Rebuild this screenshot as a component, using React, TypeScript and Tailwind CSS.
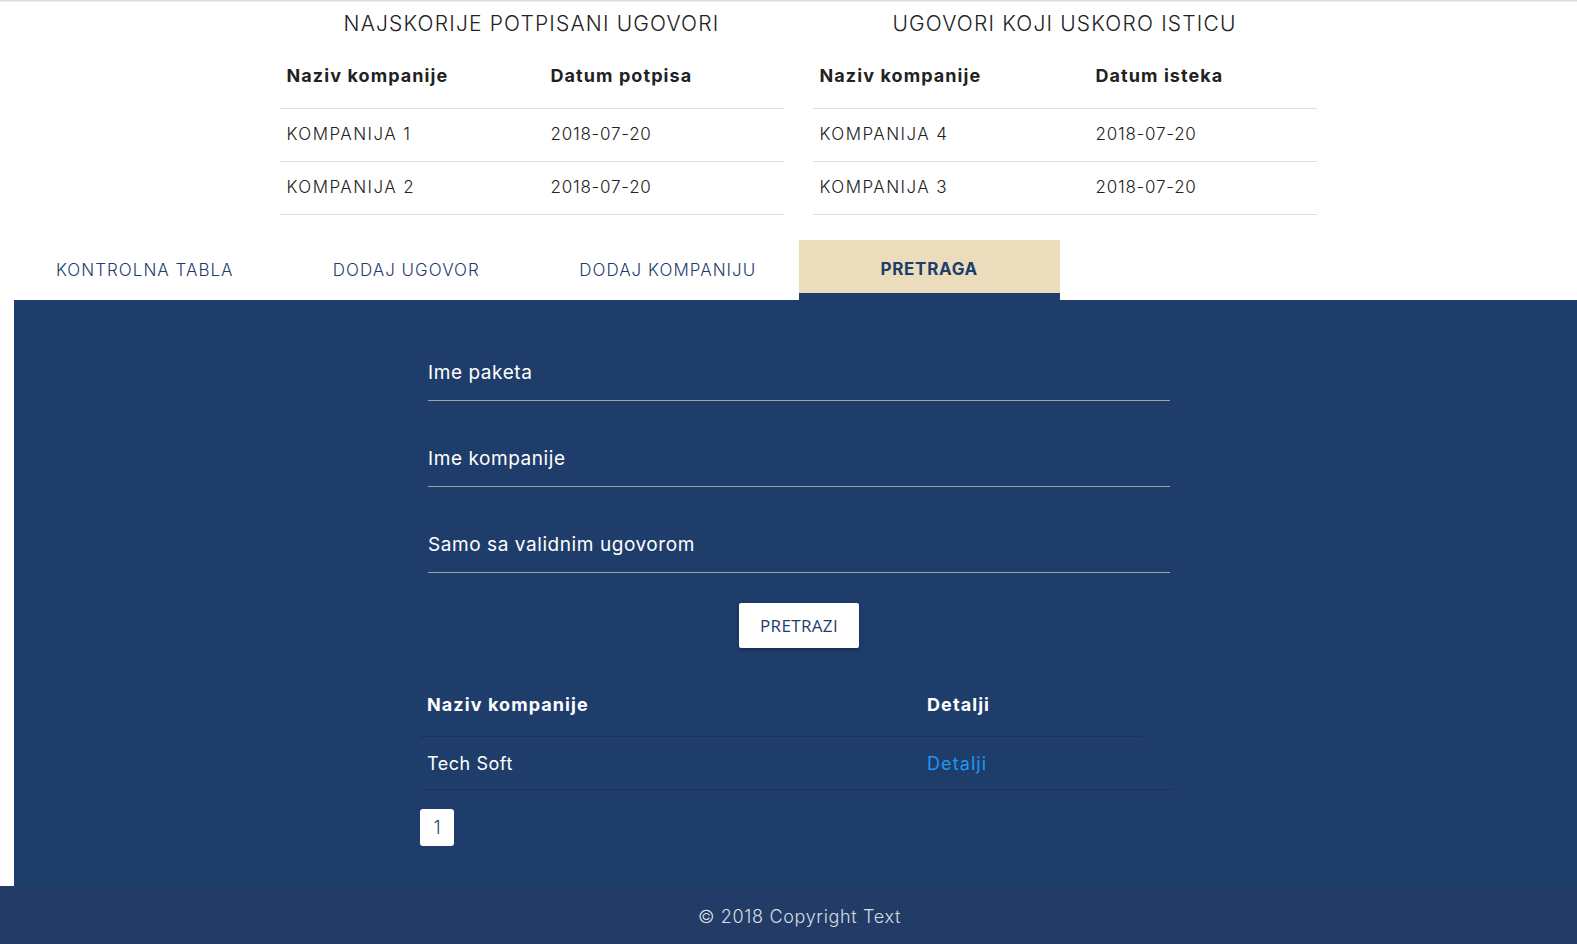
import React from "react";

const recent = [
  { name: "KOMPANIJA 1", date: "2018-07-20" },
  { name: "KOMPANIJA 2", date: "2018-07-20" }
];
const expiring = [
  { name: "KOMPANIJA 4", date: "2018-07-20" },
  { name: "KOMPANIJA 3", date: "2018-07-20" }
];
const tabs = ["KONTROLNA TABLA", "DODAJ UGOVOR", "DODAJ KOMPANIJU", "PRETRAGA"];
const fields = ["Ime paketa", "Ime kompanije", "Samo sa validnim ugovorom"];

function ContractTable({ title, dateLabel, rows, firstCol }: {
  title: string;
  dateLabel: string;
  rows: { name: string; date: string }[];
  firstCol: string;
}) {
  return <div className="w-[504px]">
      <h2 className="h-[41px] pt-[6px] text-center text-[21px] font-light tracking-[0.056em] text-[#222]">
        {title}
      </h2>
      <div className="flex h-[66px] items-center border-b border-[#dedede] text-[18px] font-bold tracking-[0.06em] text-[#222]">
        <div className={`${firstCol} pl-[7px]`}>Naziv kompanije</div>
        <div>{dateLabel}</div>
      </div>
      {rows.map(r => <div key={r.name} className="flex h-[53px] items-center border-b border-[#dedede] text-[17px] font-light text-[#222]">
          <div className={`${firstCol} pl-[7px] tracking-[0.085em]`}>{r.name}</div>
          <div className="tracking-[0.045em]">{r.date}</div>
        </div>)}
    </div>;
}

export default function App() {
  return <div className="flex min-h-screen flex-col bg-white font-['Inter',sans-serif]">
      <div className="h-[2px] bg-gradient-to-b from-[#d4d4d4] to-[#f4f4f4]" />
      <section className="flex justify-center gap-[29px] pl-[19px]">
        <ContractTable title="NAJSKORIJE POTPISANI UGOVORI" dateLabel="Datum potpisa" rows={recent} firstCol="w-[271px]" />
        <ContractTable title="UGOVORI KOJI USKORO ISTICU" dateLabel="Datum isteka" rows={expiring} firstCol="w-[283px]" />
      </section>
      <nav className="mt-[25px] flex pl-[14px]">
        {tabs.map(t => t === "PRETRAGA" ? <div key={t} className="flex h-[60px] w-[261.5px] items-center justify-center border-b-[7px] border-[#1f3d6b] bg-[#ebdcbb] pt-[6px] text-[17px] font-bold tracking-[0.04em] text-[#1f3d6b]">
              {t}
            </div> : <div key={t} className="flex h-[60px] w-[261.5px] items-center justify-center pt-[2px] text-[17px] font-light tracking-[0.06em] text-[#1f3d6b]">
              {t}
            </div>)}
      </nav>
      <main className="ml-[14px] h-[586px] bg-[#1f3d6b] pt-[15px]">
        <div className="w-[742px]" style={{ marginLeft: 414 }}>
          {fields.map(f => <div key={f} className="flex h-[86px] items-end border-b border-[#9aa3b0] pb-[13px] text-[19px] font-normal tracking-[0.03em] text-white">
              {f}
            </div>)}
          <div className="flex justify-center pt-[30px]">
            <button className="h-[45px] w-[120px] rounded-[2px] bg-white font-['Open_Sans',sans-serif] text-[17px] font-normal tracking-[0.02em] text-[#1f3d6b] shadow-[0_2px_4px_rgba(0,0,0,0.3)]">
              PRETRAZI
            </button>
          </div>
        </div>
        <div className="mt-[22px] w-[753px]" style={{ marginLeft: 406 }}>
          <div className="flex h-[67px] w-[721px] items-center border-b border-[#1a3459] pt-[2px] text-[18px] font-bold tracking-[0.06em] text-white">
            <div className="w-[507px] pl-[7px]">Naziv kompanije</div>
            <div>Detalji</div>
          </div>
          <div className="flex h-[53px] items-center border-b border-[#1a3459] text-[18px] text-white">
            <div className="w-[507px] pl-[7px] tracking-[0.03em]">Tech Soft</div>
            <a href="#" className="tracking-[0.06em] text-[#2196f3]">Detalji</a>
          </div>
          <div className="mt-[19px] flex h-[37px] w-[34px] items-center justify-center rounded-[3px] bg-white text-[18px] font-light text-[#1f3d6b]">
            1
          </div>
        </div>
      </main>
      <footer className="flex h-[58px] items-center justify-center bg-[#223c67] pl-[22px] pt-[2px] text-[18px] font-light tracking-[0.037em] text-[#d8dce3]">
        © 2018 Copyright Text
      </footer>
    </div>;
}
